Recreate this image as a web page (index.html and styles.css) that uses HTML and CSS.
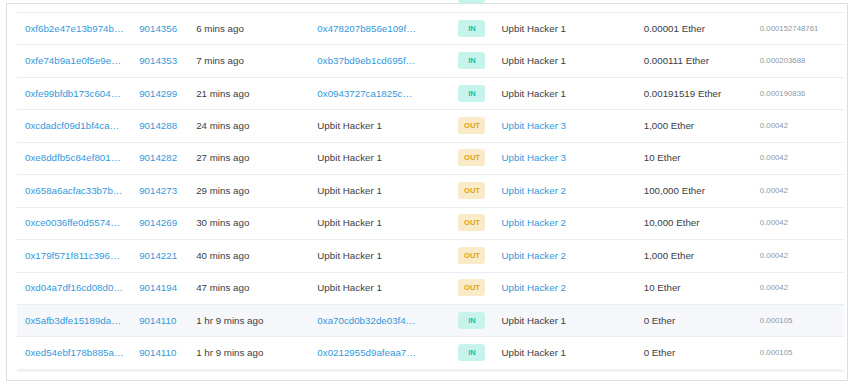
FILE: index.html
```html
<!DOCTYPE html>
<html lang="en">
<head>
    <meta charset="UTF-8">
    <meta name="viewport" content="width=device-width, initial-scale=1.0">
    <title>Transactions</title>
    <link rel="stylesheet" href="styles.css">
</head>
<body>
    <div class="peek"><span class="peek-badge"></span></div>
    <div class="card">
        <div class="table-wrap">
            <table class="tx-table">
                <colgroup>
                    <col style="width: 114px">
                    <col style="width: 57px">
                    <col style="width: 121px">
                    <col style="width: 141px">
                    <col style="width: 43px">
                    <col style="width: 142px">
                    <col style="width: 116px">
                    <col style="width: 92px">
                </colgroup>
                <tbody>
                    <tr>
                        <td><a href="#">0xf6b2e47e13b974b…</a></td>
                        <td><a href="#">9014356</a></td>
                        <td>6 mins ago</td>
                        <td><a href="#">0x478207b856e109f…</a></td>
                        <td><span class="badge badge-in">IN</span></td>
                        <td>Upbit Hacker 1</td>
                        <td>0.00001 Ether</td>
                        <td class="fee">0.000152748761</td>
                    </tr>
                    <tr>
                        <td><a href="#">0xfe74b9a1e0f5e9e…</a></td>
                        <td><a href="#">9014353</a></td>
                        <td>7 mins ago</td>
                        <td><a href="#">0xb37bd9eb1cd695f…</a></td>
                        <td><span class="badge badge-in">IN</span></td>
                        <td>Upbit Hacker 1</td>
                        <td>0.000111 Ether</td>
                        <td class="fee">0.000203688</td>
                    </tr>
                    <tr>
                        <td><a href="#">0xfe99bfdb173c604…</a></td>
                        <td><a href="#">9014299</a></td>
                        <td>21 mins ago</td>
                        <td><a href="#">0x0943727ca1825c…</a></td>
                        <td><span class="badge badge-in">IN</span></td>
                        <td>Upbit Hacker 1</td>
                        <td>0.00191519 Ether</td>
                        <td class="fee">0.000190836</td>
                    </tr>
                    <tr>
                        <td><a href="#">0xcdadcf09d1bf4ca…</a></td>
                        <td><a href="#">9014288</a></td>
                        <td>24 mins ago</td>
                        <td>Upbit Hacker 1</td>
                        <td><span class="badge badge-out">OUT</span></td>
                        <td><a href="#">Upbit Hacker 3</a></td>
                        <td>1,000 Ether</td>
                        <td class="fee">0.00042</td>
                    </tr>
                    <tr>
                        <td><a href="#">0xe8ddfb5c84ef801…</a></td>
                        <td><a href="#">9014282</a></td>
                        <td>27 mins ago</td>
                        <td>Upbit Hacker 1</td>
                        <td><span class="badge badge-out">OUT</span></td>
                        <td><a href="#">Upbit Hacker 3</a></td>
                        <td>10 Ether</td>
                        <td class="fee">0.00042</td>
                    </tr>
                    <tr>
                        <td><a href="#">0x658a6acfac33b7b…</a></td>
                        <td><a href="#">9014273</a></td>
                        <td>29 mins ago</td>
                        <td>Upbit Hacker 1</td>
                        <td><span class="badge badge-out">OUT</span></td>
                        <td><a href="#">Upbit Hacker 2</a></td>
                        <td>100,000 Ether</td>
                        <td class="fee">0.00042</td>
                    </tr>
                    <tr>
                        <td><a href="#">0xce0036ffe0d5574…</a></td>
                        <td><a href="#">9014269</a></td>
                        <td>30 mins ago</td>
                        <td>Upbit Hacker 1</td>
                        <td><span class="badge badge-out">OUT</span></td>
                        <td><a href="#">Upbit Hacker 2</a></td>
                        <td>10,000 Ether</td>
                        <td class="fee">0.00042</td>
                    </tr>
                    <tr>
                        <td><a href="#">0x179f571f811c396…</a></td>
                        <td><a href="#">9014221</a></td>
                        <td>40 mins ago</td>
                        <td>Upbit Hacker 1</td>
                        <td><span class="badge badge-out">OUT</span></td>
                        <td><a href="#">Upbit Hacker 2</a></td>
                        <td>1,000 Ether</td>
                        <td class="fee">0.00042</td>
                    </tr>
                    <tr>
                        <td><a href="#">0xd04a7df16cd08d0…</a></td>
                        <td><a href="#">9014194</a></td>
                        <td>47 mins ago</td>
                        <td>Upbit Hacker 1</td>
                        <td><span class="badge badge-out">OUT</span></td>
                        <td><a href="#">Upbit Hacker 2</a></td>
                        <td>10 Ether</td>
                        <td class="fee">0.00042</td>
                    </tr>
                    <tr class="hover">
                        <td><a href="#">0x5afb3dfe15189da…</a></td>
                        <td><a href="#">9014110</a></td>
                        <td>1 hr 9 mins ago</td>
                        <td><a href="#">0xa70cd0b32de03f4…</a></td>
                        <td><span class="badge badge-in">IN</span></td>
                        <td>Upbit Hacker 1</td>
                        <td>0 Ether</td>
                        <td class="fee">0.000105</td>
                    </tr>
                    <tr>
                        <td><a href="#">0xed54ebf178b885a…</a></td>
                        <td><a href="#">9014110</a></td>
                        <td>1 hr 9 mins ago</td>
                        <td><a href="#">0x0212955d9afeaa7…</a></td>
                        <td><span class="badge badge-in">IN</span></td>
                        <td>Upbit Hacker 1</td>
                        <td>0 Ether</td>
                        <td class="fee">0.000105</td>
                    </tr>
                </tbody>
            </table>
        </div>
    </div>
</body>
</html>
```

FILE: styles.css
```css
body {
    margin: 0;
    font-family: "Liberation Sans", Arial, sans-serif;
    font-size: 9.75px;
    color: #3a3d42;
    background-color: #fff;
}
.peek {
    height: 3px;
    overflow: hidden;
}
.peek-badge {
    display: block;
    width: 27px;
    height: 3px;
    margin-left: 458px;
    background-color: #c6f4ec;
    border-radius: 0 0 3px 3px;
}
.card {
    margin-left: 6px;
    width: 842px;
    height: 378px;
    box-sizing: border-box;
    border: 1px solid #dcdfe4;
    padding: 8px 3px 0 10px;
}
.table-wrap {
    border-bottom: 3px solid #eff1f4;
}
.tx-table {
    width: 100%;
    border-collapse: collapse;
    table-layout: fixed;
}
.tx-table td {
    height: 32.45px;
    box-sizing: border-box;
    padding: 0 0 1px 8px;
    border-top: 1px solid #e9ecf2;
    white-space: nowrap;
    overflow: hidden;
    vertical-align: middle;
}
.tx-table tr.hover td {
    background-color: #f6f7fa;
}
.tx-table a {
    color: #3498db;
    text-decoration: none;
}
.tx-table .fee {
    font-size: 7.8px;
    color: #8c98a4;
}
.badge {
    display: inline-block;
    width: 27px;
    height: 17px;
    line-height: 17px;
    text-align: center;
    border-radius: 3px;
    font-size: 7.5px;
    font-weight: bold;
    vertical-align: middle;
}
.badge-in {
    color: #00c9a7;
    background-color: #c6f4ec;
}
.badge-out {
    color: #d9a21b;
    background-color: #faebc8;
}
```
